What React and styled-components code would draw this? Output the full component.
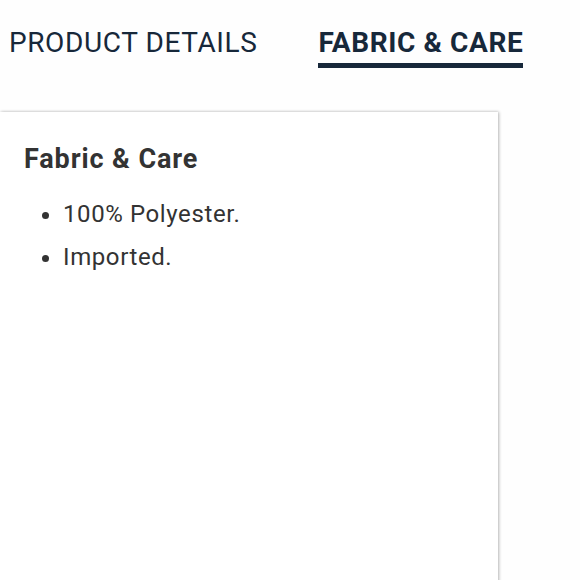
import React, { useState } from "react";
import styled, { createGlobalStyle } from "styled-components";

const GlobalStyle = createGlobalStyle`
  html, body {
    margin: 0;
    padding: 0;
    background: #fefefe;
    font-family: Roboto, "Liberation Sans", sans-serif;
  }
`;

const Page = styled.div`
  width: 580px;
  height: 580px;
  overflow: hidden;
`;

const Tabs = styled.div`
  display: flex;
  gap: 61px;
  padding: 26px 0 0 9px;
  height: 88px;
  box-sizing: border-box;
`;

const Tab = styled.button`
  border: none;
  background: none;
  padding: 0 0 3px;
  margin: 0;
  font-family: inherit;
  font-size: 28px;
  line-height: 34px;
  letter-spacing: 0.6px;
  font-weight: ${(p) => (p.active ? 700 : 400)};
  color: #17283a;
  border-bottom: 5px solid ${(p) => (p.active ? "#17283a" : "transparent")};
  cursor: pointer;
  align-self: flex-start;
`;

const Card = styled.div`
  width: 498px;
  height: 480px;
  margin-top: 24px;
  background: #fff;
  box-shadow: 1px 0 3px rgba(0, 0, 0, 0.28), 0 -1px 2px rgba(0, 0, 0, 0.04);
  padding: 30px 0 0 24px;
  box-sizing: border-box;
  color: #333;
`;

const Heading = styled.h2`
  margin: 0 0 17px;
  font-size: 27px;
  line-height: 34px;
  letter-spacing: 0.9px;
  font-weight: 700;
`;

const List = styled.ul`
  margin: 0;
  padding-left: 39px;
`;

const Item = styled.li`
  font-size: 24px;
  line-height: 43px;
  letter-spacing: 0.6px;
`;

const tabs = ["PRODUCT DETAILS", "FABRIC & CARE"];

export default function App() {
  const [active, setActive] = useState(1);
  return (
    <Page>
      <GlobalStyle />
      <Tabs>
        {tabs.map((t, i) => (
          <Tab key={t} active={i === active} onClick={() => setActive(i)}>
            {t}
          </Tab>
        ))}
      </Tabs>
      <Card>
        <Heading>Fabric &amp; Care</Heading>
        <List>
          <Item>100% Polyester.</Item>
          <Item>Imported.</Item>
        </List>
      </Card>
    </Page>
  );
}
